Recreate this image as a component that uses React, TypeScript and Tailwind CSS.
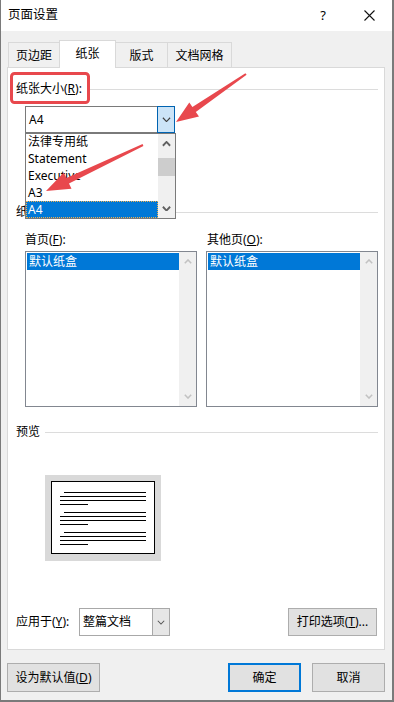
import React from 'react';

const RED = '#e8484d';

function arrowPoints(x1: number, y1: number, x2: number, y2: number, headLen: number, headW: number, tailW: number, neckW: number) {
  const dx = x2 - x1;
  const dy = y2 - y1;
  const len = Math.hypot(dx, dy);
  const ux = dx / len;
  const uy = dy / len;
  const nx = -uy;
  const ny = ux;
  const bx = x2 - ux * headLen;
  const by = y2 - uy * headLen;
  const pts = [
    [x1 + (nx * tailW) / 2, y1 + (ny * tailW) / 2],
    [bx + (nx * neckW) / 2, by + (ny * neckW) / 2],
    [bx + (nx * headW) / 2, by + (ny * headW) / 2],
    [x2, y2],
    [bx - (nx * headW) / 2, by - (ny * headW) / 2],
    [bx - (nx * neckW) / 2, by - (ny * neckW) / 2],
    [x1 - (nx * tailW) / 2, y1 - (ny * tailW) / 2],
  ];
  return pts.map((p) => `${p[0].toFixed(1)},${p[1].toFixed(1)}`).join(' ');
}

function Chevron({ up = false, color = '#5f5f5f', w = 9, sw = 1 }: { up?: boolean; color?: string; w?: number; sw?: number }) {
  return (
    <svg width={w} height={w / 2 + 1} viewBox="0 0 10 6" className="block">
      <path d={up ? 'M1 5.2 L5 1 L9 5.2' : 'M1 0.8 L5 5 L9 0.8'} fill="none" stroke={color} strokeWidth={sw * 1.3} />
    </svg>
  );
}

function Tab({ label, active = false, className = '' }: { label: string; active?: boolean; className?: string }) {
  return (
    <div
      className={
        active
          ? `relative z-10 -mb-px flex h-[28px] w-[57px] items-center justify-center border-x border-t border-[#d9d9d9] bg-white pb-[2px] ${className}`
          : `flex h-[25px] items-center justify-center border-t border-[#d9d9d9] bg-[#f0f0f0] pt-[1px] ${className}`
      }
    >
      {label}
    </div>
  );
}

function ListBox({ className = '' }: { className?: string }) {
  return (
    <div className={`flex h-[156px] w-[172px] border border-[#828790] bg-white ${className}`}>
      <div className="flex-1 pl-[1px] pt-[1px]">
        <div className="flex h-[17px] items-center bg-[#0078d7] pl-[2px] text-white">默认纸盒</div>
      </div>
      <div className="flex w-[17px] flex-col items-center justify-between bg-[#f0f0f0] py-[7px]">
        <Chevron up color="#c2c2c2" w={8} sw={1.4} />
        <Chevron color="#c2c2c2" w={8} sw={1.4} />
      </div>
    </div>
  );
}

function PreviewLines() {
  return (
    <div className="flex flex-col gap-[3px]">
      <div className="ml-[4px] h-px w-[82px] bg-black" />
      <div className="h-px w-[86px] bg-black" />
      <div className="h-px w-[86px] bg-black" />
      <div className="h-px w-[28px] bg-black" />
    </div>
  );
}

export default function App() {
  return (
    <div className="relative h-[702px] w-[394px] overflow-hidden border-b-2 border-l border-r-2 border-[#7a7a7a] bg-[#f0f0f0] font-['Noto_Sans','Noto_Sans_CJK_SC',sans-serif] text-[12px] leading-none text-black">
      {/* title bar */}
      <div className="flex h-[31px] items-center bg-white pl-[7px]">
        <span className="flex-1 text-[12.5px]">页面设置</span>
        <span className="flex w-[46px] justify-center text-[13px]">?</span>
        <span className="flex w-[46px] justify-center">
          <svg width="11" height="11" viewBox="0 0 11 11">
            <path d="M0.5 0.5 L10.5 10.5 M10.5 0.5 L0.5 10.5" stroke="#111" strokeWidth="1.1" />
          </svg>
        </span>
      </div>

      {/* tabs */}
      <div className="flex h-[36px] items-end pl-[7px]">
        <Tab label="页边距" className="w-[51px] border-l" />
        <Tab label="纸张" active />
        <Tab label="版式" className="w-[52px] border-r" />
        <Tab label="文档网格" className="w-[64px] border-r" />
      </div>

      {/* panel */}
      <div className="ml-[6px] flex h-[583px] w-[378px] flex-col border border-[#d9d9d9] bg-white pl-[8px] pr-[6px]">
        <div className="mt-[13px] flex h-[16px] items-center">
          <span>
            纸张大小(<span className="underline">R</span>):
          </span>
          <div className="ml-[8px] h-px flex-1 bg-[#dcdcdc]" />
        </div>

        <div className="ml-[9px] mt-[9px] flex h-[27px] w-[150px] border border-[#7a7a7a] bg-white">
          <div className="flex flex-1 items-center pl-[3px]">A4</div>
          <div className="-my-px -mr-px flex w-[18px] items-center justify-center border border-[#0063b1] bg-[#cce4f7]">
            <Chevron color="#404040" w={9} />
          </div>
        </div>

        <div className="mt-[71px] flex h-[16px] items-center">
          <span>纸张来源</span>
          <div className="ml-[8px] h-px flex-1 bg-[#dcdcdc]" />
        </div>

        <div className="ml-[9px] mt-[12px] flex gap-[9px]">
          <div className="flex flex-col">
            <div className="flex h-[16px] items-center">
              首页(<span className="underline">F</span>):
            </div>
            <ListBox className="mt-[3px]" />
          </div>
          <div className="flex flex-col">
            <div className="flex h-[16px] items-center pl-[1px]">
              其他页(<span className="underline">O</span>):
            </div>
            <ListBox className="mt-[3px]" />
          </div>
        </div>

        <div className="mt-[17px] flex h-[16px] items-center">
          <span>预览</span>
          <div className="ml-[5px] h-px flex-1 bg-[#dcdcdc]" />
        </div>

        <div className="ml-[29px] mt-[35px] h-[86px] w-[116px] bg-[#d9d9d9] pl-[6px] pt-[6px]">
          <div className="flex h-[73px] w-[104px] flex-col gap-[7px] border border-black bg-white pl-[8px] pt-[10px]">
            <PreviewLines />
            <PreviewLines />
            <PreviewLines />
          </div>
        </div>

        <div className="mt-[47px] flex h-[28px] items-center">
          <span className="w-[63px]">
            应用于(<span className="underline">Y</span>):
          </span>
          <div className="flex h-[28px] w-[91px] border border-[#a8a8a8] bg-white">
            <div className="flex flex-1 items-center pl-[3px]">整篇文档</div>
            <div className="flex w-[17px] items-center justify-center border-l border-[#a8a8a8] bg-[#e6e6e6]">
              <Chevron color="#555" w={8} />
            </div>
          </div>
          <div className="ml-auto mr-[1px] flex h-[28px] w-[89px] items-center justify-center border border-[#adadad] bg-[#e1e1e1]">
            打印选项(<span className="underline">T</span>)...
          </div>
        </div>
      </div>

      {/* bottom buttons */}
      <div className="ml-[6px] mt-[13px] flex w-[378px]">
        <div className="flex h-[29px] w-[93px] items-center justify-center border border-[#adadad] bg-[#e1e1e1]">
          设为默认值(<span className="underline">D</span>)
        </div>
        <div className="ml-auto flex h-[29px] w-[73px] items-center justify-center border-2 border-[#0078d7] bg-[#e1e1e1]">确定</div>
        <div className="ml-[11px] flex h-[29px] w-[73px] items-center justify-center border border-[#adadad] bg-[#e1e1e1]">取消</div>
      </div>

      {/* open dropdown list of 纸张大小 */}
      <div className="absolute left-[24px] top-[133px] flex h-[86px] w-[151px] border border-[#7a7a7a] bg-white">
        <div className="flex flex-1 flex-col">
          <div className="flex h-[17px] items-center pl-[2px]">法律专用纸</div>
          <div className="flex h-[17px] items-center pl-[2px]">Statement</div>
          <div className="flex h-[17px] items-center pl-[2px]">Executive</div>
          <div className="flex h-[17px] items-center pl-[2px]">A3</div>
          <div className="flex h-[17px] items-center border border-dotted border-[#f0b050] bg-[#0078d7] pl-[1px] text-white">A4</div>
        </div>
        <div className="relative flex w-[17px] flex-col items-center justify-between bg-[#f0f0f0] py-[7px]">
          <Chevron up color="#606060" w={9} sw={1.6} />
          <div className="absolute left-0 top-[24px] h-[18px] w-[17px] bg-[#cdcdcd]" />
          <Chevron color="#606060" w={9} sw={1.6} />
        </div>
      </div>

      {/* annotations */}
      <svg className="pointer-events-none absolute left-[-1px] top-0" width="394" height="702" viewBox="0 0 394 702">
        <rect x="11.5" y="73.5" width="77" height="29" rx="3" fill="none" stroke={RED} strokeWidth="3" />
        <polygon points={arrowPoints(246, 74, 176, 122, 22, 17, 2, 6)} fill={RED} />
        <polygon points={arrowPoints(143, 145, 46, 191, 24, 18, 2, 6)} fill={RED} />
      </svg>
    </div>
  );
}
